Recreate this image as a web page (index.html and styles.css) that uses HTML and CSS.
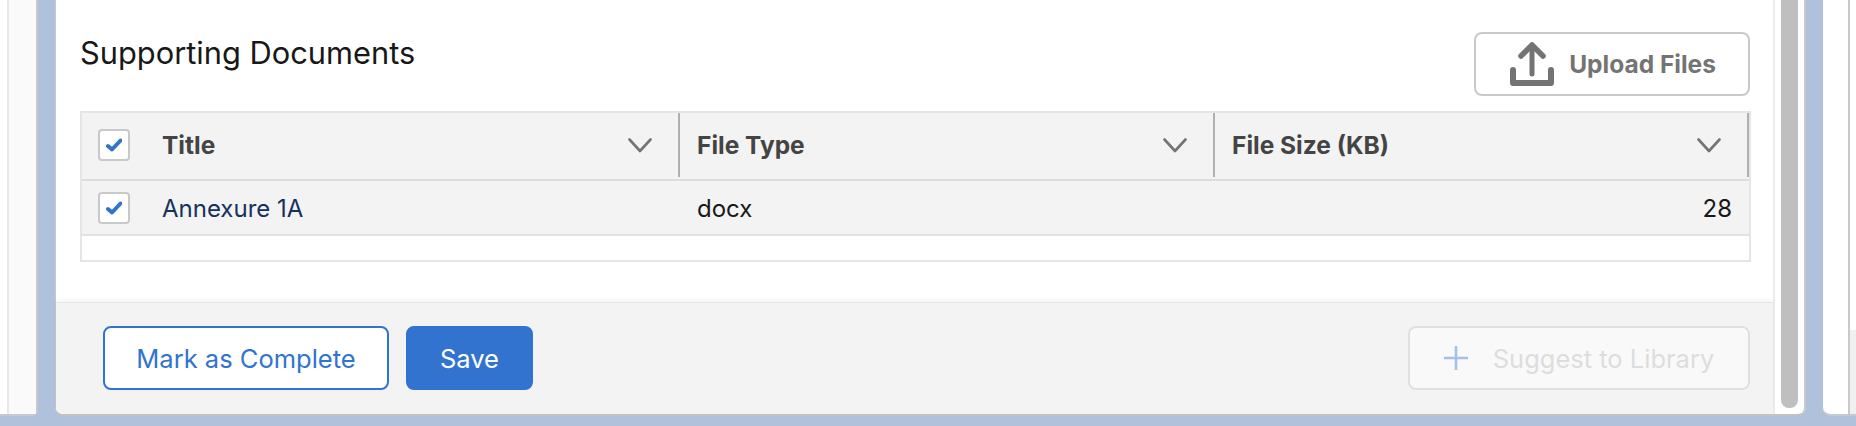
FILE: index.html
```html
<!DOCTYPE html>
<html lang="en">
<head>
  <meta charset="UTF-8" />
  <title>Supporting Documents</title>
  <link rel="stylesheet" href="styles.css">
</head>
<body>

<div class="page">
  <div class="side side-left"><div class="side-inner"></div></div>

  <div class="card">
    <div class="card-main">
      <div class="section">
        <div class="section-head">
          <h2>Supporting Documents</h2>
          <button class="btn btn-upload">
            <svg class="icon-upload" width="44" height="44" viewBox="0 0 44 44">
              <path d="M22 3V32" fill="none" stroke="#747474" stroke-width="5" stroke-linecap="round"/>
              <path d="M11 14L22 3L33 14" fill="none" stroke="#747474" stroke-width="5.500" stroke-linecap="round" stroke-linejoin="round"/>
              <path d="M3 28V41H41V28" fill="none" stroke="#747474" stroke-width="6" stroke-linecap="round" stroke-linejoin="round"/>
            </svg>
            Upload Files
          </button>
        </div>

        <table class="docs">
          <colgroup>
            <col class="col-check">
            <col class="col-title">
            <col class="col-type">
            <col class="col-size">
          </colgroup>
          <thead>
            <tr>
              <th><span class="check"><svg width="16" height="14" viewBox="0 0 16 14"><path d="M2 8L6 11.500L14.500 2.500" fill="none" stroke="#2f74d0" stroke-width="4" stroke-linejoin="round" stroke-linecap="round"/></svg></span></th>
              <th><div class="th-inner">Title<svg class="chev" width="24" height="15" viewBox="0 0 24 15"><path d="M1.500 1.500L12 13L22.500 1.500" fill="none" stroke="#747474" stroke-width="2.600" stroke-linecap="round" stroke-linejoin="round"/></svg></div></th>
              <th><div class="th-inner">File Type<svg class="chev" width="24" height="15" viewBox="0 0 24 15"><path d="M1.500 1.500L12 13L22.500 1.500" fill="none" stroke="#747474" stroke-width="2.600" stroke-linecap="round" stroke-linejoin="round"/></svg></div></th>
              <th><div class="th-inner">File Size (KB)<svg class="chev" width="24" height="15" viewBox="0 0 24 15"><path d="M1.500 1.500L12 13L22.500 1.500" fill="none" stroke="#747474" stroke-width="2.600" stroke-linecap="round" stroke-linejoin="round"/></svg></div></th>
            </tr>
          </thead>
          <tbody>
            <tr class="row">
              <td><span class="check"><svg width="16" height="14" viewBox="0 0 16 14"><path d="M2 8L6 11.500L14.500 2.500" fill="none" stroke="#2f74d0" stroke-width="4" stroke-linejoin="round" stroke-linecap="round"/></svg></span></td>
              <td class="cell-title"><a href="#">Annexure 1A</a></td>
              <td class="cell-type">docx</td>
              <td class="cell-size">28</td>
            </tr>
            <tr class="blank"><td colspan="4"></td></tr>
          </tbody>
        </table>
      </div>

      <div class="footer">
        <button class="btn btn-complete">Mark as Complete</button>
        <button class="btn btn-save">Save</button>
        <button class="btn btn-suggest" disabled>
          <svg width="24" height="24" viewBox="0 0 24 24"><path d="M12 0V24M0 12H24" stroke="#a3c0e8" stroke-width="2.600"/></svg>
          Suggest to Library
        </button>
      </div>
    </div>

    <div class="scroll"><div class="thumb"></div></div>
  </div>

  <div class="side side-right"><div class="side-rest"></div></div>
</div>

</body>
</html>
```

FILE: styles.css
```css
* {
  box-sizing: border-box;
}
html, body {
  height: 100%;
}
body {
  margin: 0;
  background: #b0c1dc;
  font-family: 'Inter', sans-serif;
  color: #181818;
  overflow: hidden;
}
.page {
  display: flex;
  gap: 17px;
  height: 416px;
}

/* panels either side of the card */
.side {
  background: #fff;
  border-bottom: 2px solid #c4c9d2;
}
.side-left {
  width: 38px;
  padding-left: 7px;
  border-right: 2px solid #c9c9c9;
  border-bottom-right-radius: 6px;
}
.side-inner {
  height: 100%;
  background: #fafafa;
  border-left: 2px solid #e8e8e8;
}
.side-right {
  flex: 1;
  padding-left: 25px;
  border-bottom-left-radius: 8px;
}
.side-rest {
  height: 100%;
  border-left: 2px solid #c9c9c9;
  background: linear-gradient(#fff 330px, #f0f0f0 330px);
}

/* main card */
.card {
  display: flex;
  width: 1751px;
  background: #fff;
  border-left: 1px solid #c9c9c9;
  border-right: 2px solid #c9c9c9;
  border-bottom: 2px solid #c2c2c2;
  border-radius: 0 0 8px 8px;
}
.card-main {
  display: flex;
  flex-direction: column;
  width: 1719px;
  border-right: 2px solid #ececec;
}
.section {
  flex: 1;
  padding: 32px 23px 0 24px;
}
.section-head {
  display: flex;
  justify-content: space-between;
  height: 79px;
}
.section-head h2 {
  margin: 4px 0 0;
  font-size: 30.800px;
  font-weight: 400;
  line-height: 34px;
}

/* buttons */
.btn {
  display: flex;
  align-items: center;
  justify-content: center;
  height: 64px;
  border-radius: 8px;
  font-family: 'Inter', sans-serif;
  font-size: 25.500px;
  cursor: pointer;
}
.btn-upload {
  width: 276px;
  padding: 0 0 0 2px;
  gap: 15px;
  background: #fff;
  border: 2px solid #c9c9c9;
  color: #747474;
  font-size: 24.500px;
  font-weight: 700;
}
.btn-complete {
  width: 286px;
  background: #fff;
  border: 2px solid #2f74d0;
  color: #2f74d0;
}
.btn-save {
  width: 127px;
  margin-left: 17px;
  background: #3173ce;
  border: 2px solid #3173ce;
  color: #fff;
}
.btn-suggest {
  width: 342px;
  margin-left: auto;
  gap: 25px;
  background: #f9f9f9;
  border: 2px solid #e0e0e0;
  color: #dddddd;
}

/* documents table */
.docs {
  width: 1671px;
  table-layout: fixed;
  border-collapse: separate;
  border-spacing: 0;
  border: 2px solid #e5e5e5;
}
.col-check {
  width: 67px;
}
.col-title {
  width: 531px;
}
.col-type {
  width: 535px;
}
.col-size {
  width: 534px;
}
.docs th {
  height: 68px;
  padding: 0 0 2px;
  background: #f3f3f3;
  border-bottom: 2px solid #dddddd;
  font-size: 24.500px;
  font-weight: 700;
  color: #444;
  text-align: left;
  vertical-align: top;
}
.docs th:first-child {
  padding: 16px 0 0 16px;
}
.th-inner {
  display: flex;
  align-items: center;
  justify-content: space-between;
  height: 64px;
  padding: 0 26px 0 13px;
  border-right: 2px solid #b0b0b0;
}
.docs th:nth-child(n+3) .th-inner {
  padding-left: 17px;
}
.check {
  display: flex;
  align-items: center;
  justify-content: center;
  width: 32px;
  height: 32px;
  background: #fff;
  border: 2px solid #c9c9c9;
  border-radius: 4px;
}
.row td {
  height: 55px;
  padding: 2px 0 0;
  background: #f3f3f3;
  border-bottom: 2px solid #e2e2e2;
  font-size: 24px;
}
.row td:first-child {
  padding: 0 0 0 16px;
}
.row .cell-title {
  padding-left: 13px;
}
.cell-title a {
  color: #16325c;
  text-decoration: none;
}
.row .cell-type {
  padding-left: 17px;
}
.row .cell-size {
  padding-right: 17px;
  text-align: right;
}
.blank td {
  height: 24px;
  padding: 0;
}

/* bottom bar */
.footer {
  display: flex;
  height: 112px;
  padding: 23px 23px 0 47px;
  background: #f3f3f3;
  border-top: 1px solid #e6e6e6;
  border-bottom-left-radius: 8px;
  box-shadow: 0 -2px 4px rgba(0, 0, 0, 0.05);
}

/* scrollbar */
.scroll {
  flex: 1;
  padding: 0 6px 0 6px;
}
.thumb {
  height: 408px;
  background: #bfbfbf;
  border-radius: 0 0 8px 8px;
}
```
